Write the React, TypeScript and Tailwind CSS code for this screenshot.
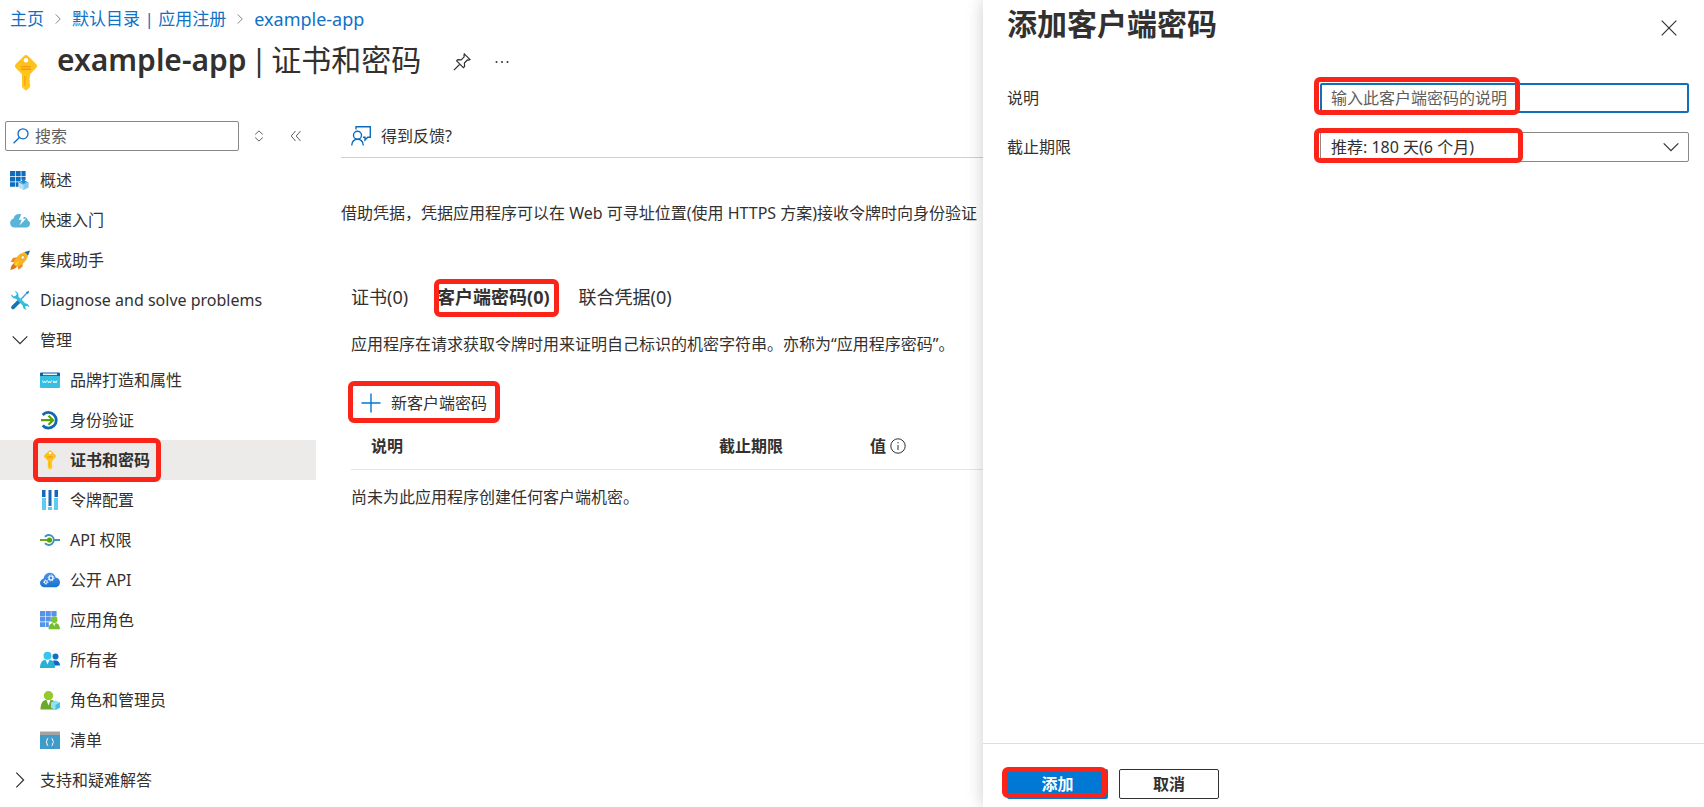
import React from "react"

const LINK = "text-[#1071c5] hover:underline"

/* Highlight frame drawn over a control */
function Mark({ className }: { className: string }) {
  return <span aria-hidden="true" className={`pointer-events-none absolute z-10 rounded-md border-5 border-[#fb2418] ${className}`} />
}

function Chevron({ className }: { className: string }) {
  return (
    <svg viewBox="0 0 16 16" className={className} fill="none" stroke="currentColor" strokeWidth="1.2">
      <path d="M0.7 4.3 8 11.6l7.3-7.3" />
    </svg>
  )
}

function KeyIcon({ className }: { className: string }) {
  return (
    <svg viewBox="0 0 22 36" className={className}>
      <defs>
        <linearGradient id="key" x1="0" y1="0" x2="0" y2="1">
          <stop offset="0" stopColor="#fdbf1b" />
          <stop offset="1" stopColor="#ffca1f" />
        </linearGradient>
      </defs>
      <path fill="url(#key)" d="M9 .9a3 3 0 0 1 4 0l8.100 8.100a3 3 0 0 1 0 4.100l-6 6.200v2.200l-.8 1 .8 1-.8 1.300.8 1.200-.8 1.300.8 1.200v3.500L12 35a1.500 1.500 0 0 1-2 0l-3-3V19.300L.9 13.100a3 3 0 0 1 0-4.100z" />
      <path fill="#f29a13" d="M6 11h10v1.300H6zM6 13.600h10v1.300H6z" />
      <path fill="#f9a51a" d="M9 21h1.500v10.500L9 30z" />
      <circle cx="11" cy="5.300" r="2.300" fill="#fff" />
    </svg>
  )
}

const svg = "h-5 w-5 shrink-0"

const icons: Record<string, React.ReactNode> = {
  overview: (
    <svg viewBox="0 0 20 20" className={svg}>
      <path fill="#0f6cbd" d="M0 1h5v5H0zM5.700 1h5v5h-5zM11.400 1h4.200v5h-4.200zM0 6.700h5v4.800H0zM5.700 6.700h5v4.800h-5zM11.400 6.700h4.200v3h-4.200zM0 12.200h5v4.500H0zM5.700 12.200h3v4.500h-3z" />
      <path fill="#b9e3f5" d="m8.500 12.500 5-2 5 2v5l-5 2.500-5-2.500z" />
      <path fill="#56aede" d="m8.500 12.500 5 2.200 5-2.200-5-2.500z" />
      <path fill="#86c9ea" d="M13.500 14.700v5.300l5-2.500v-5z" />
      <path fill="#2384c6" d="M12 9h3v2h1.300l-2.800 2.700-2.800-2.700H12z" />
    </svg>
  ),
  quick: (
    <svg viewBox="0 0 20 20" className={svg}>
      <path fill="#59b4d9" d="M4.500 17.500A4.500 4.500 0 0 1 .1 13c0-2.200 1.600-3.800 3.300-4.200C4 5.600 6.300 4 9 4c2.400 0 4 .9 5.200 3 2.900.4 3.500 2.200 3.500 3.500 1.500.4 2.300 1.600 2.300 3.300 0 2-1.500 3.700-3.500 3.700z" />
      <path fill="#fff" d="m12 3-3.300 6.800h3L9.500 15.500 16 8.700h-3l3-5.700z" />
    </svg>
  ),
  rocket: (
    <svg viewBox="0 0 20 20" className={svg}>
      <path fill="#f08a1d" d="M8 7.200 3.200 7.700.5 11.800l4.300.5zM13 12.500l-.6 4.200-4.100 3-.5-4.500z" />
      <path fill="#f9b51b" d="M3.500 13.300C5 7.500 9.500 3.500 14.500 2.100l3.600 3.500C16.900 10.600 12.500 15.200 7 17z" />
      <path fill="#e8700f" d="m3.500 13.300 3.500 3.700L3.800 19l-3.500 1 .8-3.500z" />
      <path fill="#ffcf3d" d="m4.500 14.300 1.700 1.700L10 10z" />
      <path fill="#1668a8" d="M14.500 2.100 20 .5l-1.900 5.100z" />
      <circle cx="12.800" cy="7.400" r="1.900" fill="#e6f4fb" stroke="#df8417" strokeWidth=".7" />
    </svg>
  ),
  tools: (
    <svg viewBox="0 0 20 20" className={svg}>
      <path d="M3 17.300 9.500 10.800" stroke="#1573b8" strokeWidth="3.800" strokeLinecap="round" />
      <path d="m10 10.500 7.500-8.200" stroke="#4a9fd4" strokeWidth="1.400" />
      <path fill="#1f76b5" d="m16 2.200 2.600-1.300.6.600-1.300 2.600z" />
      <path d="M5.500 6 15.500 16" stroke="#35bfe0" strokeWidth="3.400" />
      <path fill="#2fb9dc" d="M4.500 1.300c2.500 0 4.300 1.800 4 4.600L6 8.400C3.200 8.600 1 6.700 1.200 4.200l2.600 2.200 2.600-.8.300-2.300zM15.500 13.500c2.200 0 3.900 1.700 3.700 4l-2.100-1.700-1.700.4-.2 1.700 1.800 1.500c-2.600.3-4.300-1.400-4.200-3.700z" />
    </svg>
  ),
  brand: (
    <svg viewBox="0 0 20 20" className={svg}>
      <path fill="#35c0e3" d="M0 6h20v11a1 1 0 0 1-1 1H1a1 1 0 0 1-1-1z" />
      <path fill="#175ea8" d="M1 2.500h18a1 1 0 0 1 1 1V6H0V3.500a1 1 0 0 1 1-1z" />
      <path fill="#e8f6fc" d="M3 3.500h14v1.600H3z" />
      <path fill="none" stroke="#e5faff" strokeWidth=".9" d="m2.500 10.500 1 2.500 1-2 1 2 1-2.500M7.500 10.500l1 2.500 1-2 1 2 1-2.500M13 10.500l1 2.500 1-2 1 2 1-2.500" />
    </svg>
  ),
  auth: (
    <svg viewBox="0 0 20 20" className={svg}>
      <path fill="none" stroke="#1068b5" strokeWidth="2.800" d="M2.700 5A7.800 7.800 0 1 1 2.700 15.500" />
      <path fill="none" stroke="#57a300" strokeWidth="2.200" d="M1 10.200h11.500M8.500 5.700l4.500 4.500-4.500 4.500" />
    </svg>
  ),
  key: (
    <span className="flex h-5 w-5 shrink-0 justify-center">
      <KeyIcon className="h-5 w-3" />
    </span>
  ),
  token: (
    <svg viewBox="0 0 20 20" className={svg}>
      <path fill="#5ccdf0" d="M2 8h4v12H2zM8 17h4v3H8zM14 8h4v12h-4z" />
      <path fill="#1669b7" d="M2 0h3.500v7H2zM8.500 0h3v16h-3zM14.500 0H18v7h-3.500z" />
    </svg>
  ),
  permission: (
    <svg viewBox="0 0 20 20" className={svg}>
      <path fill="none" stroke="#4391bd" strokeWidth="1.900" d="M5 6.800A5 5 0 1 1 5 13.200M14.500 10H20" />
      <path stroke="#57a300" strokeWidth="1.800" d="M0 10h9" />
      <circle cx="9.500" cy="10" r="2.600" fill="#57a300" />
    </svg>
  ),
  expose: (
    <svg viewBox="0 0 20 20" className={svg}>
      <defs>
        <linearGradient id="cloud" x1="0" y1="0" x2="0" y2="1">
          <stop offset="0" stopColor="#4c94ea" />
          <stop offset="1" stopColor="#1673cf" />
        </linearGradient>
      </defs>
      <path fill="url(#cloud)" d="M4.500 17.300A4.500 4.500 0 0 1 0 12.900c0-2.100 1.500-3.700 3.500-4.100C4 5.200 6.500 2.700 9.800 2.700c3 0 5 1.800 5.900 4.700 2.500.3 4.300 2.200 4.300 4.800 0 3-2.200 5.100-5 5.100z" />
      <circle cx="11" cy="8" r="2" fill="none" stroke="#fff" strokeWidth="1.200" />
      <circle cx="11" cy="8" r="2.900" fill="none" stroke="#fff" strokeWidth=".9" strokeDasharray="1.200 1.080" />
      <circle cx="5.800" cy="12" r="1.400" fill="none" stroke="#fff" strokeWidth="1" />
      <circle cx="5.800" cy="12" r="2.200" fill="none" stroke="#fff" strokeWidth=".8" strokeDasharray=".9 .83" />
    </svg>
  ),
  roles: (
    <svg viewBox="0 0 20 20" className={svg}>
      <path fill="#5594e8" d="M0 1h5.200v5H0zM5.800 1h5v5h-5zM11.400 1h5.200v5h-5.200zM0 6.600h5.200v5H0zM5.800 6.600h5v5h-5zM0 12.200h5.200v4.800H0zM5.800 12.200h3v4.800h-3zM11.400 6.600h5.200v2h-5.200z" />
      <circle cx="14.200" cy="9.800" r="3.300" fill="#7cc728" />
      <path fill="#76bc2d" d="M8.500 19.200c0-3.700 1.800-6 4-6h3.400c2.200 0 4 2.300 4 6z" />
      <path fill="#f4fbe9" d="m12.900 13.200 1.300 3.300 1.300-3.300z" />
    </svg>
  ),
  owners: (
    <svg viewBox="0 0 20 20" className={svg}>
      <circle cx="15.500" cy="6.600" r="3" fill="#1270c4" />
      <path fill="#0f66b8" d="M13 10.500h3.500c2 .4 3.500 2.800 3.500 5h-6z" />
      <circle cx="7.500" cy="5.700" r="4" fill="#35c6ea" />
      <path fill="#29b0d8" d="M0 18c0-4.500 2-8 5-8h5c3 0 5 3.500 5 7a1 1 0 0 1-1 1z" />
      <path fill="#fff" d="m5.700 9.900 1.800 4.600 1.800-4.600z" />
    </svg>
  ),
  admins: (
    <svg viewBox="0 0 20 20" className={svg}>
      <circle cx="8.500" cy="5.700" r="4.700" fill="#95ca2c" />
      <path fill="#6ba82b" d="M.5 19.500c0-5.500 2-9.500 5.500-9.500h5c2.500 0 4.500 2 5 5.500V19.500z" />
      <path fill="#fff" d="m6.500 10 2 5.500 2-5.500z" />
      <path fill="#8fe1f3" d="m11 12.500 4.500-2 4.500 2v5.300L15.500 20 11 17.800z" />
      <path fill="#4fbfe0" d="m15.500 14.700 4.500-2.200v5.300L15.500 20z" />
    </svg>
  ),
  manifest: (
    <svg viewBox="0 0 20 20" className={svg}>
      <path fill="#3f9bc7" d="M0 5h20v14H0z" />
      <path fill="#a3a3a3" d="M0 1.500h20V5H0z" />
      <path fill="none" stroke="#fff" strokeWidth="1" d="M8.200 8.300c-2 0-.4 3.200-2.200 3.700 1.800.5.200 3.700 2.200 3.700M11.500 8.300c2 0 .4 3.200 2.200 3.700-1.800.5-.2 3.700-2.200 3.700" />
    </svg>
  ),
  open: <Chevron className="h-5 w-5 shrink-0 p-0.5" />,
  closed: <Chevron className="h-5 w-5 shrink-0 -rotate-90 p-0.5" />,
}

const items = [
  { icon: "overview", label: "概述" },
  { icon: "quick", label: "快速入门" },
  { icon: "rocket", label: "集成助手" },
  { icon: "tools", label: "Diagnose and solve problems" },
  { icon: "open", label: "管理", group: true },
  { icon: "brand", label: "品牌打造和属性", child: true },
  { icon: "auth", label: "身份验证", child: true },
  { icon: "key", label: "证书和密码", child: true, active: true },
  { icon: "token", label: "令牌配置", child: true },
  { icon: "permission", label: "API 权限", child: true },
  { icon: "expose", label: "公开 API", child: true },
  { icon: "roles", label: "应用角色", child: true },
  { icon: "owners", label: "所有者", child: true },
  { icon: "admins", label: "角色和管理员", child: true },
  { icon: "manifest", label: "清单", child: true },
  { icon: "closed", label: "支持和疑难解答", group: true },
]

function Sidebar() {
  return (
    <div className="w-[316px] shrink-0">
      <div className="flex items-center pl-[5px]">
        <label className="flex h-[30px] w-[234px] items-center gap-1.5 rounded-xs border border-[#8a8886] px-[7px]">
          <svg viewBox="0 0 16 16" className="h-4 w-4 shrink-0" fill="none" stroke="#0f6cbd" strokeWidth="1.300">
            <circle cx="10" cy="5.800" r="5" />
            <path d="M6.300 9.500.6 15.200" />
          </svg>
          <input type="text" placeholder="搜索" aria-label="搜索" className="w-full min-w-0 outline-none placeholder:text-[#605e5c]" />
        </label>
        <button aria-label="排序" className="ml-[15px]">
          <svg viewBox="0 0 10 12" className="h-3 w-2.5" fill="none" stroke="#605e5c" strokeWidth="1">
            <path d="M1.200 4.500 5 .9l3.800 3.600M1.200 7.500 5 11.100l3.800-3.600" />
          </svg>
        </button>
        <button aria-label="折叠菜单" className="ml-[26px]">
          <svg viewBox="0 0 12 12" className="h-3 w-3" fill="none" stroke="#605e5c" strokeWidth="1">
            <path d="M5.500 1 1.200 6l4.300 5M10.500 1 6.200 6l4.300 5" />
          </svg>
        </button>
      </div>
      <ul className="mt-[9px]">
        {items.map((item) => {
          const row = `relative flex h-10 w-full items-center gap-2.5 ${item.child ? "pl-10" : "pl-2.5"} ${item.active ? "bg-[#edebe9] font-bold" : ""}`
          return (
            <li key={item.label}>
              {item.group ? (
                <button className={row} aria-expanded={item.icon === "open"}>
                  {icons[item.icon]}
                  <span>{item.label}</span>
                </button>
              ) : (
                <a href="#" className={row} aria-current={item.active ? "page" : undefined}>
                  {icons[item.icon]}
                  <span>{item.label}</span>
                  {item.active && <Mark className="-inset-y-0.5 left-[33px] w-[128px]" />}
                </a>
              )}
            </li>
          )
        })}
      </ul>
    </div>
  )
}

function Credentials() {
  return (
    <main className="ml-[25px] min-w-0 flex-1">
      <div className="h-[37px] border-b border-[#d2d0ce] pl-2.5">
        <button className="flex h-[30px] items-center gap-2.5">
          <svg viewBox="0 0 20 20" className="h-5 w-5" fill="none" stroke="#0f6cbd" strokeWidth="1.400">
            <circle cx="6.500" cy="9.300" r="4" />
            <path d="M.7 19.500c.3-3.800 2.700-6.200 5.800-6.200s5.500 2.400 5.800 6.200M5 3.500V.8h14.300v10.400h-2.600L14 14v-2.800h-2" />
          </svg>
          得到反馈?
        </button>
      </div>
      <p className="mt-[43px] leading-6">借助凭据，凭据应用程序可以在 Web 可寻址位置(使用 HTTPS 方案)接收令牌时向身份验证</p>

      <div className="pl-2.5">
        <div role="tablist" className="mt-14 flex h-8 items-center gap-[29px] text-lg">
          <button role="tab" aria-selected="false">证书(0)</button>
          <button role="tab" aria-selected="true" className="relative font-bold">
            客户端密码(0)
            <Mark className="-top-1 -left-[3px] h-[38px] w-[125px]" />
          </button>
          <button role="tab" aria-selected="false">联合凭据(0)</button>
        </div>
        <p className="mt-[19px] leading-6">应用程序在请求获取令牌时用来证明自己标识的机密字符串。亦称为“应用程序密码”。</p>

        <button className="relative mt-[31px] flex h-8 items-center gap-2.5 px-2.5">
          <svg viewBox="0 0 20 20" className="h-5 w-5" fill="none" stroke="#0078d4" strokeWidth="1.400">
            <path d="M10 .5v19M.5 10h19" />
          </svg>
          新客户端密码
          <Mark className="-top-1.5 -bottom-1 -left-[3px] w-[152px]" />
        </button>

        <table className="mt-[5px] w-full table-fixed text-left">
          <thead>
            <tr className="h-[45px] border-b border-[#e6e5e3]">
              <th className="w-[348px] px-5">说明</th>
              <th className="w-[151px] px-5">截止期限</th>
              <th className="px-5">
                <span className="flex items-center gap-1">
                  值
                  <svg viewBox="0 0 16 16" className="h-4 w-4" fill="none" stroke="#323130" strokeWidth="1">
                    <circle cx="8" cy="8" r="7.200" />
                    <path d="M8 7v5M8 4v1.300" />
                  </svg>
                </span>
              </th>
            </tr>
          </thead>
          <tbody>
            <tr className="h-14">
              <td colSpan={3}>尚未为此应用程序创建任何客户端机密。</td>
            </tr>
          </tbody>
        </table>
      </div>
    </main>
  )
}

function AddSecretPanel() {
  return (
    <aside className="relative z-20 flex w-[721px] shrink-0 flex-col bg-white shadow-[0_0_16px_rgba(0,0,0,0.2)]">
      <div className="flex h-[83px] items-start justify-between pr-[27px] pl-6">
        <h2 className="text-[30px] leading-12 font-bold">添加客户端密码</h2>
        <button aria-label="关闭" className="mt-5">
          <svg viewBox="0 0 16 16" className="h-4 w-4" fill="none" stroke="#323130" strokeWidth="1.200">
            <path d="m.7.7 14.600 14.600M15.300.7.7 15.300" />
          </svg>
        </button>
      </div>
      <form className="flex flex-1 flex-col gap-[19px] pr-[15px] pl-6">
        <div className="flex h-[30px] items-center">
          <label htmlFor="desc" className="flex-1">说明</label>
          <div className="relative w-[369px]">
            <input id="desc" type="text" placeholder="输入此客户端密码的说明" className="block h-[30px] w-full rounded-xs border-2 border-[#106ebe] px-[9px] outline-none placeholder:text-[#605e5c]" />
            <Mark className="-top-1.5 -left-1.5 h-[38px] w-[206px]" />
          </div>
        </div>
        <div className="flex h-[30px] items-center">
          <label htmlFor="expires" className="flex-1">截止期限</label>
          <div className="relative w-[369px]">
            <select id="expires" className="block h-[30px] w-full appearance-none rounded-xs border border-[#8a8886] bg-white px-2.5 outline-none">
              <option>推荐: 180 天(6 个月)</option>
            </select>
            <Chevron className="pointer-events-none absolute top-[7px] right-2.5 h-4 w-4" />
            <Mark className="-top-1 -left-1.5 h-[35px] w-[209px]" />
          </div>
        </div>
      </form>
      <div className="flex h-16 gap-[11px] border-t border-[#e1dfdd] pt-[25px] pl-6 font-bold">
        <button className="relative h-[30px] w-[101px] rounded-xs bg-[#0078d4] text-white">
          添加
          <Mark className="-top-0.5 -left-[5px] h-[31px] w-[105px]" />
        </button>
        <button className="h-[30px] w-[100px] rounded-xs border border-[#323130]">取消</button>
      </div>
    </aside>
  )
}

export default function App() {
  return (
    <div className="flex min-h-screen w-full overflow-hidden bg-white font-['Noto_Sans','Noto_Sans_CJK_SC',sans-serif] text-base whitespace-nowrap text-[#323130]">
      <div className="min-w-0 flex-1 overflow-hidden">
        <nav aria-label="Breadcrumb" className="flex h-[38px] items-center gap-[9px] pl-2.5 text-[17px]">
          <a href="#" className={LINK}>主页</a>
          <Chevron className="h-2.5 w-2.5 -rotate-90 text-[#605e5c]" />
          <a href="#" className={LINK}>默认目录 | 应用注册</a>
          <Chevron className="h-2.5 w-2.5 -rotate-90 text-[#605e5c]" />
          <a href="#" className={`text-lg ${LINK}`}>example-app</a>
        </nav>
        <div className="flex h-[83px] items-start pl-[15px]">
          <KeyIcon className="mt-[17px] h-9 w-[22px]" />
          <h1 className="ml-5 flex gap-1 text-[30px] leading-11">
            <span className="font-semibold">example-app</span>
            <span>|</span>
            <span>证书和密码</span>
          </h1>
          <button aria-label="固定" className="mt-[15px] ml-8">
            <svg viewBox="0 0 18 18" className="h-[18px] w-[18px]" fill="none" stroke="#323130" strokeWidth="1.200">
              <path d="M11.300.9 17 6.600l-1.300.6-1.300-.2-3 3 .2 3.400-1.200 1.200-6.800-6.800 1.200-1.200 3.400.2 3-3-.2-1.300zM7 11 .9 17.100" />
            </svg>
          </button>
          <button aria-label="更多" className="mt-[15px] ml-6">
            <svg viewBox="0 0 14 18" className="h-[18px] w-3.5" fill="#323130">
              <circle cx="1.500" cy="9" r="1" />
              <circle cx="7" cy="9" r="1" />
              <circle cx="12.500" cy="9" r="1" />
            </svg>
          </button>
        </div>
        <div className="flex">
          <Sidebar />
          <Credentials />
        </div>
      </div>
      <AddSecretPanel />
    </div>
  )
}
